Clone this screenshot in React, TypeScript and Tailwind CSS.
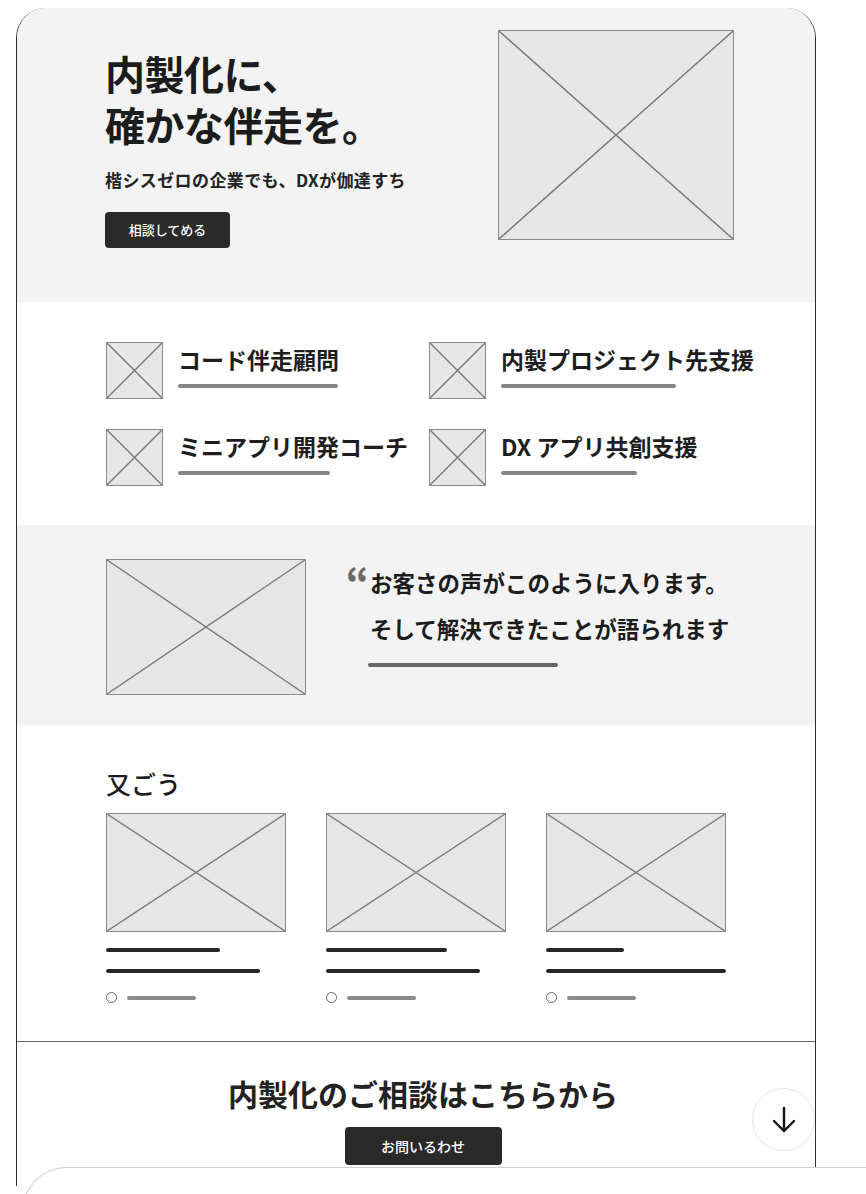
import React from "react";

const FONT = { fontFamily: '"Noto Sans CJK JP", "Noto Sans", sans-serif' };

function Ph({ className }: { className: string }) {
  return (
    <div className={`relative shrink-0 border-[1.5px] border-[#8a8a8a] bg-[#e6e6e6] ${className}`}>
      <svg className="absolute inset-0 h-full w-full" viewBox="0 0 100 100" preserveAspectRatio="none">
        <line x1="0" y1="0" x2="100" y2="100" stroke="#7a7a7a" strokeWidth="1.4" vectorEffect="non-scaling-stroke" />
        <line x1="100" y1="0" x2="0" y2="100" stroke="#7a7a7a" strokeWidth="1.4" vectorEffect="non-scaling-stroke" />
      </svg>
    </div>
  );
}

function Feature({ title, bar }: { title: string; bar: string }) {
  return (
    <div className="flex items-start gap-[15px]">
      <Ph className="h-[57px] w-[57px]" />
      <div className="pt-[2px]">
        <div className="whitespace-nowrap text-[23px] font-bold leading-[30px] text-[#1e1e1e]">{title}</div>
        <div className={`mt-[10px] h-[4px] rounded-full bg-[#868686] ${bar}`} />
      </div>
    </div>
  );
}

function Card({ b1, b2 }: { b1: string; b2: string }) {
  return (
    <div className="flex w-[180px] flex-col">
      <Ph className="h-[119px] w-[180px]" />
      <div className={`mt-[16px] h-[4px] rounded-full bg-[#262626] ${b1}`} />
      <div className={`mt-[17px] h-[4px] rounded-full bg-[#262626] ${b2}`} />
      <div className="mt-[19px] flex items-center gap-[10px]">
        <div className="h-[11px] w-[11px] rounded-full border-[1.5px] border-[#666]" />
        <div className="h-[4px] w-[69px] rounded-full bg-[#8a8a8a]" />
      </div>
    </div>
  );
}

export default function App() {
  return (
    <div className="relative h-[1194px] w-[866px] overflow-hidden bg-white" style={FONT}>
      <div className="ml-[16px] mt-[8px] h-[1178px] w-[800px] overflow-hidden rounded-t-[30px] border-x-[1.5px] border-[#2e2e2e] bg-white">
        {/* hero */}
        <div className="flex h-[294px] justify-between bg-[#f3f3f3] pl-[88px] pr-[81px]">
          <div className="pt-[40px]">
            <h1 className="text-[40px] font-bold leading-[51px] tracking-[-0.5px] text-[#1c1c1c]">
              <span className="block">内製化に、</span>
              <span className="block">確かな伴走を。</span>
            </h1>
            <p className="mt-[18px] whitespace-nowrap text-[17px] font-bold leading-[24px] tracking-[0.4px] text-[#222]">
              楷シスゼロの企業でも、DXが伽達すち
            </p>
            <button className="mt-[20px] flex h-[36px] w-[125px] items-center justify-center rounded-[4px] bg-[#2a2a2a] text-[13px] font-medium text-white">
              相談してめる
            </button>
          </div>
          <Ph className="mt-[22px] h-[210px] w-[236px]" />
        </div>

        {/* features */}
        <div className="h-[223px] bg-white pl-[89px] pt-[40px]">
          <div className="grid w-[660px] grid-cols-[323px_1fr] gap-y-[30px]">
            <Feature title="コード伴走顧問" bar="w-[160px]" />
            <Feature title="内製プロジェクト先支援" bar="w-[175px]" />
            <Feature title="ミニアプリ開発コーチ" bar="w-[152px]" />
            <Feature title="DX アプリ共創支援" bar="w-[136px]" />
          </div>
        </div>

        {/* testimonial */}
        <div className="flex h-[200px] items-start gap-[40px] bg-[#f3f3f3] pl-[89px] pt-[34px]">
          <Ph className="h-[136px] w-[200px]" />
          <div className="flex">
            <span className="w-[24px] text-[36px] font-black leading-[40px] text-[#6a6a6a]">“</span>
            <div>
              <p className="whitespace-nowrap text-[22.5px] font-semibold leading-[46px] text-[#1c1c1c]">
                <span className="block">お客さの声がこのように入ります。</span>
                <span className="block">そして解決できたことが語られます</span>
              </p>
              <div className="ml-[-2px] mt-[12px] h-[4px] w-[190px] rounded-full bg-[#666]" />
            </div>
          </div>
        </div>

        {/* cases */}
        <div className="h-[316px] bg-white pl-[89px] pt-[42px]">
          <h2 className="text-[25px] font-medium leading-[32px] text-[#1c1c1c]">又ごう</h2>
          <div className="mt-[14px] flex gap-[40px]">
            <Card b1="w-[114px]" b2="w-[154px]" />
            <Card b1="w-[121px]" b2="w-[154px]" />
            <Card b1="w-[78px]" b2="w-[180px]" />
          </div>
        </div>

        {/* cta */}
        <div className="flex flex-col items-center border-t-[1.5px] border-[#6a6a6a] pl-[14px] pt-[31px]">
          <h2 className="text-[30px] font-semibold leading-[40px] text-[#222]">内製化のご相談はこちらから</h2>
          <button className="mt-[14px] flex h-[38px] w-[157px] items-center justify-center rounded-[4px] bg-[#2a2a2a] text-[14px] font-medium text-white">
            お問いるわせ
          </button>
        </div>
      </div>

      {/* scroll button */}
      <div className="absolute left-[752px] top-[1088px] flex h-[63px] w-[63px] items-center justify-center rounded-full border-[1.5px] border-[#e2e2e2] bg-white">
        <svg width="26" height="28" viewBox="0 0 26 28" fill="none" stroke="#111" strokeWidth="2.4" strokeLinecap="round" strokeLinejoin="round">
          <line x1="13" y1="2" x2="13" y2="25" />
          <polyline points="3,15 13,25 23,15" />
        </svg>
      </div>

      {/* bottom card */}
      <div className="absolute left-[22px] top-[1167px] h-[80px] w-[880px] rounded-tl-[45px] border-l-[1.5px] border-t-[1.5px] border-[#cfcfcf] bg-white" />
    </div>
  );
}
